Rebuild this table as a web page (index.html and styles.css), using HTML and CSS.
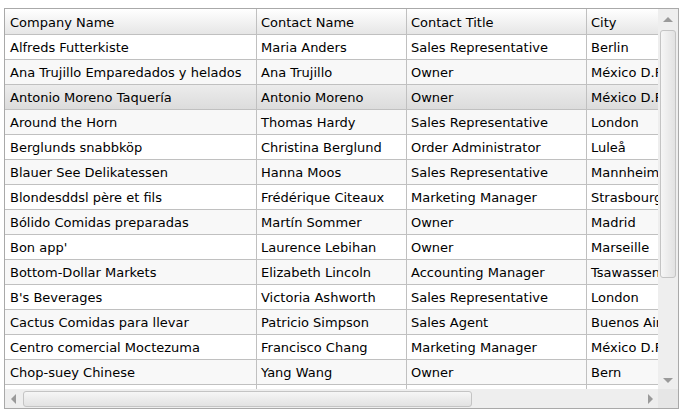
FILE: index.html
```html
<!DOCTYPE html>
<html>
<head>
<meta charset="utf-8">
<link rel="stylesheet" href="styles.css">
</head>
<body>
<div class="grid">
  <div class="viewport">
    <div class="row head">
      <div class="cell c1">Company Name</div>
      <div class="cell c2">Contact Name</div>
      <div class="cell c3">Contact Title</div>
      <div class="cell c4">City</div>
    </div>
    <div class="row"><div class="cell c1">Alfreds Futterkiste</div><div class="cell c2">Maria Anders</div><div class="cell c3">Sales Representative</div><div class="cell c4">Berlin</div></div>
    <div class="row alt"><div class="cell c1">Ana Trujillo Emparedados y helados</div><div class="cell c2">Ana Trujillo</div><div class="cell c3">Owner</div><div class="cell c4">México D.F.</div></div>
    <div class="row hover"><div class="cell c1">Antonio Moreno Taquería</div><div class="cell c2">Antonio Moreno</div><div class="cell c3">Owner</div><div class="cell c4">México D.F.</div></div>
    <div class="row alt"><div class="cell c1">Around the Horn</div><div class="cell c2">Thomas Hardy</div><div class="cell c3">Sales Representative</div><div class="cell c4">London</div></div>
    <div class="row"><div class="cell c1">Berglunds snabbköp</div><div class="cell c2">Christina Berglund</div><div class="cell c3">Order Administrator</div><div class="cell c4">Luleå</div></div>
    <div class="row alt"><div class="cell c1">Blauer See Delikatessen</div><div class="cell c2">Hanna Moos</div><div class="cell c3">Sales Representative</div><div class="cell c4">Mannheim</div></div>
    <div class="row"><div class="cell c1">Blondesddsl père et fils</div><div class="cell c2">Frédérique Citeaux</div><div class="cell c3">Marketing Manager</div><div class="cell c4">Strasbourg</div></div>
    <div class="row alt"><div class="cell c1">Bólido Comidas preparadas</div><div class="cell c2">Martín Sommer</div><div class="cell c3">Owner</div><div class="cell c4">Madrid</div></div>
    <div class="row"><div class="cell c1">Bon app'</div><div class="cell c2">Laurence Lebihan</div><div class="cell c3">Owner</div><div class="cell c4">Marseille</div></div>
    <div class="row alt"><div class="cell c1">Bottom-Dollar Markets</div><div class="cell c2">Elizabeth Lincoln</div><div class="cell c3">Accounting Manager</div><div class="cell c4">Tsawassen</div></div>
    <div class="row"><div class="cell c1">B's Beverages</div><div class="cell c2">Victoria Ashworth</div><div class="cell c3">Sales Representative</div><div class="cell c4">London</div></div>
    <div class="row alt"><div class="cell c1">Cactus Comidas para llevar</div><div class="cell c2">Patricio Simpson</div><div class="cell c3">Sales Agent</div><div class="cell c4">Buenos Aires</div></div>
    <div class="row"><div class="cell c1">Centro comercial Moctezuma</div><div class="cell c2">Francisco Chang</div><div class="cell c3">Marketing Manager</div><div class="cell c4">México D.F.</div></div>
    <div class="row alt"><div class="cell c1">Chop-suey Chinese</div><div class="cell c2">Yang Wang</div><div class="cell c3">Owner</div><div class="cell c4">Bern</div></div>
    <div class="row"><div class="cell c1">Comércio Mineiro</div><div class="cell c2">Pedro Afonso</div><div class="cell c3">Sales Associate</div><div class="cell c4">Sao Paulo</div></div>
  </div>
  <div class="vscroll">
    <div class="arrow up"></div>
    <div class="vtrack"><div class="vthumb"></div></div>
    <div class="arrow down"></div>
  </div>
  <div class="hscroll">
    <div class="arrow left"></div>
    <div class="htrack"><div class="hthumb"></div></div>
    <div class="arrow right"></div>
  </div>
  <div class="corner"></div>
</div>
</body>
</html>
```
FILE: styles.css
```css
html, body { margin: 0; padding: 0; background: #fff; }
body { padding: 8px 0 0 4px; }
.grid {
  width: 673px;
  height: 399px;
  border: 1px solid #a9a9a9;
  display: grid;
  grid-template-columns: 653px 20px;
  grid-template-rows: 380px 19px;
  font-family: "DejaVu Sans", Verdana, sans-serif;
  font-size: 13px;
  color: #000;
  overflow: hidden;
}
.viewport { overflow: hidden; background: #fff; }
.row {
  display: flex;
  height: 24px;
  border-bottom: 1px solid #c0c0c0;
  width: max-content;
}
.row.alt { background: #f8f8f8; }
.row.hover { background: linear-gradient(#ececec, #dcdcdc); }
.row.head { height: 25px; background: linear-gradient(#ffffff, #e6e6e6); }
.cell {
  box-sizing: border-box;
  border-right: 1px solid #c0c0c0;
  padding-left: 4px;
  padding-top: 1px;
  display: flex;
  align-items: center;
  white-space: nowrap;
  overflow: hidden;
}
.c1 { width: 252px; padding-left: 5px; }
.c2 { width: 150px; }
.c3 { width: 180px; }
.c4 { width: 140px; }
.vscroll {
  background: #eeeeee;
  display: flex;
  flex-direction: column;
  align-items: center;
}
.vtrack { flex: 1; width: 100%; display: flex; flex-direction: column; align-items: center; }
.vthumb {
  margin-top: 1px;
  width: 16px;
  height: 248px;
  box-sizing: border-box;
  border: 1px solid #c4c4c4;
  border-radius: 3px;
  background: linear-gradient(90deg, #f6f6f6, #e2e2e2);
}
.hscroll {
  background: #eeeeee;
  display: flex;
  align-items: center;
}
.htrack { flex: 1; height: 100%; display: flex; align-items: center; }
.hthumb {
  height: 16px;
  width: 449px;
  box-sizing: border-box;
  border: 1px solid #c4c4c4;
  border-radius: 3px;
  background: linear-gradient(#f6f6f6, #e2e2e2);
}
.corner { background: #e6e6e6; }
.arrow { width: 0; height: 0; flex: none; }
.arrow.up {
  margin: 8px 0 7px;
  border-left: 5px solid transparent;
  border-right: 5px solid transparent;
  border-bottom: 5px solid #9a9a9a;
}
.arrow.down {
  margin: 7px 0 6px;
  border-left: 5px solid transparent;
  border-right: 5px solid transparent;
  border-top: 5px solid #9a9a9a;
}
.arrow.left {
  margin: 0 7px 0 6px;
  border-top: 5px solid transparent;
  border-bottom: 5px solid transparent;
  border-right: 5px solid #9a9a9a;
}
.arrow.right {
  margin: 0 5px 0 6px;
  border-top: 5px solid transparent;
  border-bottom: 5px solid transparent;
  border-left: 5px solid #9a9a9a;
}
```
